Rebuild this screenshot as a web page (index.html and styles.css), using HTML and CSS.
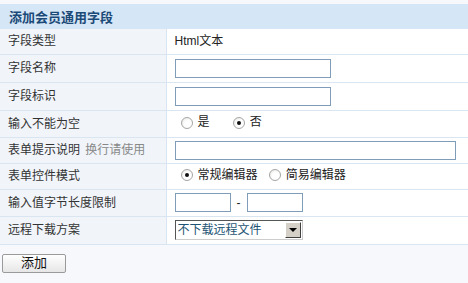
FILE: index.html
```html
<!DOCTYPE html>
<html lang="zh-CN">
<head>
    <meta charset="UTF-8">
    <title>添加会员通用字段</title>
    <link rel="stylesheet" href="styles.css">
</head>
<body>
    <form class="field-form">
        <table class="form-table">
            <tr>
                <th colspan="2" class="form-title">添加会员通用字段</th>
            </tr>
            <tr class="row-text">
                <td class="label">字段类型</td>
                <td class="value">Html文本</td>
            </tr>
            <tr class="row-input">
                <td class="label">字段名称</td>
                <td class="value"><input type="text" class="text-input"></td>
            </tr>
            <tr class="row-input">
                <td class="label">字段标识</td>
                <td class="value"><input type="text" class="text-input"></td>
            </tr>
            <tr class="row-radio">
                <td class="label">输入不能为空</td>
                <td class="value">
                    <label class="radio-item spaced"><input type="radio" name="required">是</label>
                    <label class="radio-item"><input type="radio" name="required" checked>否</label>
                </td>
            </tr>
            <tr class="row-short">
                <td class="label">表单提示说明 <span class="hint">换行请使用</span></td>
                <td class="value"><input type="text" class="text-input wide"></td>
            </tr>
            <tr class="row-short">
                <td class="label">表单控件模式</td>
                <td class="value">
                    <label class="radio-item"><input type="radio" name="editor" checked>常规编辑器</label>
                    <label class="radio-item"><input type="radio" name="editor">简易编辑器</label>
                </td>
            </tr>
            <tr class="row-radio">
                <td class="label">输入值字节长度限制</td>
                <td class="value">
                    <div class="range">
                        <input type="text" class="text-input short">
                        <span class="dash">-</span>
                        <input type="text" class="text-input short">
                    </div>
                </td>
            </tr>
            <tr class="row-input">
                <td class="label">远程下载方案</td>
                <td class="value">
                    <div class="select-box">
                        <select class="select-input">
                            <option>不下载远程文件</option>
                            <option>下载远程文件</option>
                        </select>
                        <span class="select-arrow"></span>
                    </div>
                </td>
            </tr>
        </table>
        <div class="form-actions">
            <button type="button" class="submit-button">添加</button>
        </div>
    </form>
</body>
</html>
```

FILE: styles.css
```css
* {
    margin: 0;
    padding: 0;
    box-sizing: border-box;
}

body {
    font-family: "Liberation Sans", "Noto Sans CJK SC", sans-serif;
    font-size: 12px;
    color: #333;
    background: #f7f8fc;
    padding-top: 4px;
}

.form-table {
    width: 100%;
    border-collapse: collapse;
}

.form-title {
    background: #d5e6f6;
    color: #1b4a78;
    font-weight: bold;
    text-align: left;
    height: 25px;
    padding: 0 8px 0 9px;
    font-size: 13px;
}

.form-table td {
    border-bottom: 1px solid #d9e6f1;
    padding: 0 8px;
    line-height: 16px;
    vertical-align: middle;
}

.row-text td { height: 25px; }
.row-input td { height: 28px; }
.row-radio td { height: 27px; }
.row-short td { height: 26px; }

.label {
    width: 166px;
    background: #f1f5fa;
    border-right: 1px solid #d9e6f1;
}

.value {
    background: #fff;
    color: #222;
}

.hint {
    color: #888;
    margin-left: 2px;
}

.text-input {
    display: block;
    width: 156px;
    height: 19px;
    border: 1px solid #7f9db9;
    background: #fff;
}

.text-input.wide {
    width: 281px;
}

.text-input.short {
    width: 56px;
}

.range {
    display: flex;
    align-items: center;
}

.dash {
    width: 16px;
    text-align: center;
}

.radio-item {
    display: inline-flex;
    align-items: center;
    gap: 5px;
    margin-left: 6px;
    margin-right: 2px;
    line-height: 17px;
}

.radio-item.spaced {
    margin-right: 14px;
}

.radio-item input {
    appearance: none;
    width: 12px;
    height: 12px;
    border-radius: 50%;
    border: 1px solid #a6a6a6;
    background: radial-gradient(circle at 60% 60%, #fff 40%, #e2e2dc 100%);
    position: relative;
}

.radio-item input:checked::after {
    content: "";
    position: absolute;
    top: 3px;
    left: 3px;
    width: 4px;
    height: 4px;
    border-radius: 50%;
    background: #111;
}

.select-box {
    position: relative;
    width: 128px;
    height: 20px;
    border: 1px solid;
    border-color: #555 #ccc #ccc #555;
    background: #fff;
}

.select-input {
    appearance: none;
    width: 100%;
    height: 100%;
    border: none;
    outline: none;
    background: transparent;
    color: #1d5474;
    font-family: inherit;
    font-size: 12px;
    padding-left: 2px;
    line-height: 18px;
}

.select-arrow {
    position: absolute;
    top: 1px;
    right: 1px;
    width: 16px;
    height: 16px;
    background: #d4d0c8;
    border: 1px solid;
    border-color: #fff #404040 #404040 #fff;
    pointer-events: none;
}

.select-arrow::after {
    content: "";
    position: absolute;
    top: 5px;
    left: 3px;
    border-left: 4px solid transparent;
    border-right: 4px solid transparent;
    border-top: 4px solid #000;
}

.form-actions {
    padding: 9px 2px;
}

.submit-button {
    width: 64px;
    height: 19px;
    border: 1px solid #9a9a9a;
    border-radius: 2px;
    background: linear-gradient(#fff, #e6e6e6);
    font-family: inherit;
    font-size: 13px;
    color: #111;
    line-height: 16px;
}
```
